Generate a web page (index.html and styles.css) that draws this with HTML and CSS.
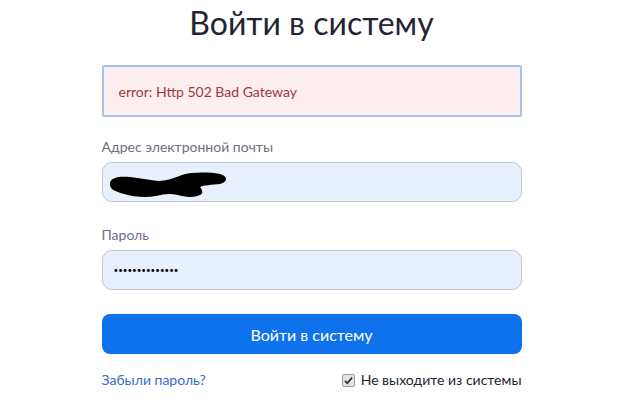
FILE: index.html
```html
<!DOCTYPE html>
<html lang="ru">
<head>
    <meta charset="UTF-8">
    <meta name="viewport" content="width=device-width, initial-scale=1.0">
    <title>Войти в систему</title>
    <link rel="stylesheet" href="styles.css">
</head>
<body>
    <form class="login" action="">
        <h1 class="title">Войти в систему</h1>
        <div class="alert">error: Http 502 Bad Gateway</div>

        <label class="label" for="email">Адрес электронной почты</label>
        <div class="field">
            <input class="input" type="text" id="email">
            <svg class="scribble" width="120" height="28" viewBox="0 0 120 28">
                <path d="M2 12 C3 6 12 5 22 6 C32 7 40 9 50 10 C58 10 66 7 74 4 C84 1 100 1 112 3 C120 5 120 11 112 13 C104 14 96 14 92 16 C94 19 96 22 92 24 C86 27 76 26 70 24 C62 22 56 23 48 25 C38 27 26 26 16 23 C6 20 1 18 2 12 Z" fill="#000"/>
            </svg>
        </div>

        <label class="label" for="password">Пароль</label>
        <div class="field">
            <input class="input secret" type="password" id="password" value="xxxxxxxxxxxxxx">
        </div>

        <button type="button" class="btn">Войти в систему</button>

        <div class="bottom">
            <a class="link" href="#">Забыли пароль?</a>
            <label class="keep">
                <span class="check">
                    <svg width="9" height="9" viewBox="0 0 9 9"><path d="M1 4.8 L3.4 7.2 L8 1.6" fill="none" stroke="#333" stroke-width="1.8"/></svg>
                </span>
                Не выходите из системы
            </label>
        </div>
    </form>
</body>
</html>
```

FILE: styles.css
```css
*{margin:0;padding:0;box-sizing:border-box;}
body{background:#fff;font-family:Lato,"Open Sans",sans-serif;color:#232333;}
.login{width:420px;margin:0 auto;display:flex;flex-direction:column;}
.title{margin-top:4px;font-size:32px;font-weight:400;line-height:38px;text-align:center;color:#232333;}
.alert{margin-top:23px;height:52px;display:flex;align-items:center;padding:0 15px;background:#fdeff0;border:2px solid #a7c1ee;border-radius:2px;color:#a1373a;font-size:14px;}
.label{margin-top:20px;font-size:14px;line-height:20px;color:#6e7080;}
.field{position:relative;margin-top:5px;}
.input{width:100%;height:40px;background:#e8f0fe;border:1px solid #bfc4cf;border-radius:10px;padding:0 11px;font-family:Lato,sans-serif;font-size:14px;color:#000;outline:none;}
.secret{font-size:8px;letter-spacing:0;}
.field + .label{margin-top:23px;}
.scribble{position:absolute;left:6px;top:9px;}
.btn{margin-top:24px;height:40px;border:none;border-radius:8px;background:#0e72ed;color:#fff;font-family:Lato,sans-serif;font-size:16px;cursor:pointer;}
.bottom{margin-top:16px;display:flex;justify-content:space-between;align-items:center;font-size:14px;line-height:20px;}
.link{color:#3a6bc9;text-decoration:none;}
.keep{display:flex;align-items:center;gap:6px;color:#232333;}
.check{width:13px;height:13px;display:flex;align-items:center;justify-content:center;background:#e4e4e4;border:1px solid #9a9a9a;border-radius:2px;}
```
